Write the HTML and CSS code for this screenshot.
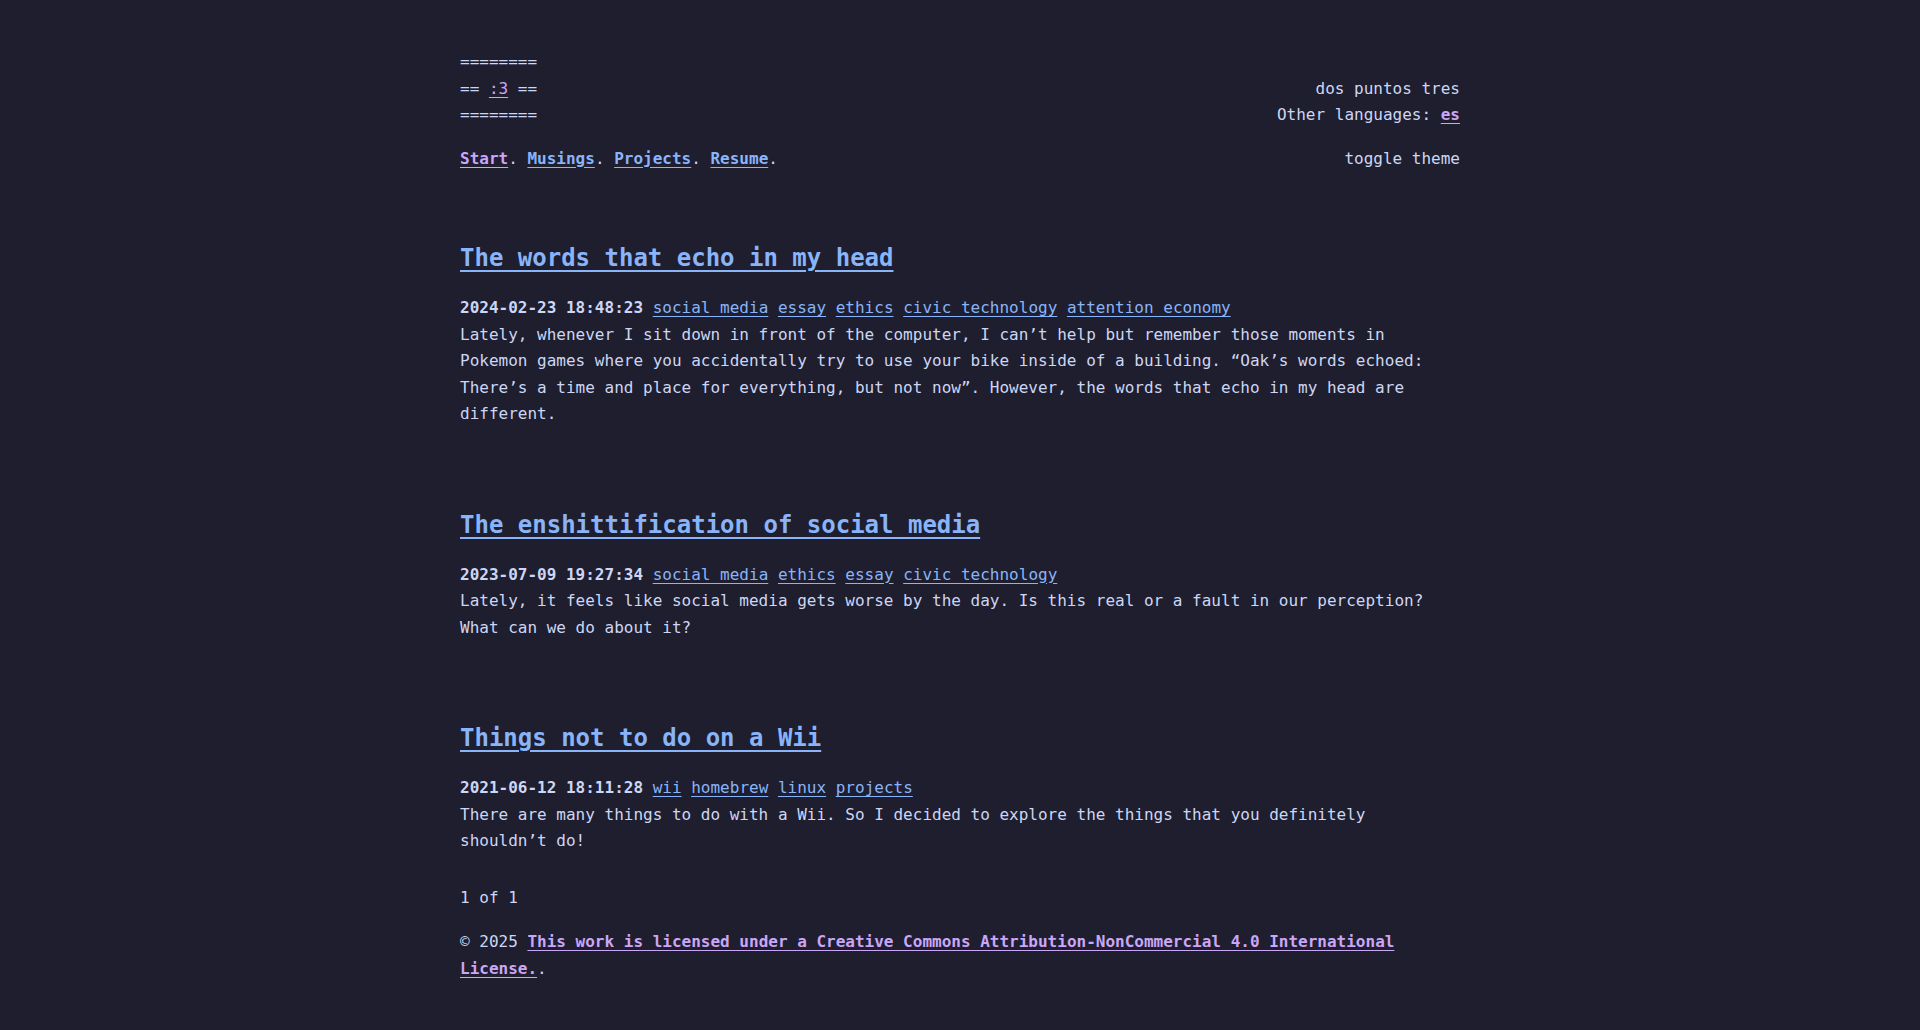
FILE: index.html
```html
<!DOCTYPE html>
<html lang="en">
<head>
<meta charset="utf-8">
<title>dos puntos tres</title>
<link rel="stylesheet" href="styles.css">
</head>
<body>
<div class="page">
  <header class="site-header">
    <div class="brand">
      <div>========</div>
      <div>== <a class="logo" href="#">:3</a> ==</div>
      <div>========</div>
    </div>
    <div class="site-info">
      <div>dos puntos tres</div>
      <div>Other languages: <a class="lang" href="#">es</a></div>
    </div>
  </header>
  <nav class="nav-row">
    <div class="nav-links"><a class="nav-link current" href="#">Start</a>. <a class="nav-link" href="#">Musings</a>. <a class="nav-link" href="#">Projects</a>. <a class="nav-link" href="#">Resume</a>.</div>
    <button class="toggle">toggle theme</button>
  </nav>

  <main class="posts">
    <article class="post">
      <h2 class="post-title"><a href="#">The words that echo in my head</a></h2>
      <div class="post-meta"><strong class="date">2024-02-23 18:48:23</strong> <a class="tag" href="#">social media</a> <a class="tag" href="#">essay</a> <a class="tag" href="#">ethics</a> <a class="tag" href="#">civic technology</a> <a class="tag" href="#">attention economy</a></div>
      <p class="post-summary">Lately, whenever I sit down in front of the computer, I can’t help but remember those moments in Pokemon games where you accidentally try to use your bike inside of a building. “Oak’s words echoed: There’s a time and place for everything, but not now”. However, the words that echo in my head are different.</p>
    </article>
    <article class="post">
      <h2 class="post-title"><a href="#">The enshittification of social media</a></h2>
      <div class="post-meta"><strong class="date">2023-07-09 19:27:34</strong> <a class="tag" href="#">social media</a> <a class="tag" href="#">ethics</a> <a class="tag" href="#">essay</a> <a class="tag" href="#">civic technology</a></div>
      <p class="post-summary">Lately, it feels like social media gets worse by the day. Is this real or a fault in our perception? What can we do about it?</p>
    </article>
    <article class="post">
      <h2 class="post-title"><a href="#">Things not to do on a Wii</a></h2>
      <div class="post-meta"><strong class="date">2021-06-12 18:11:28</strong> <a class="tag" href="#">wii</a> <a class="tag" href="#">homebrew</a> <a class="tag" href="#">linux</a> <a class="tag" href="#">projects</a></div>
      <p class="post-summary">There are many things to do with a Wii. So I decided to explore the things that you definitely shouldn’t do!</p>
    </article>
  </main>

  <div class="pagination">1 of 1</div>
  <footer class="site-footer">© 2025 <a class="license" href="#">This work is licensed under a Creative Commons Attribution-NonCommercial 4.0 International License.</a>.</footer>
</div>
</body>
</html>
```

FILE: styles.css
```css
html, body {
  margin: 0;
  padding: 0;
  background: #1e1e2e;
}

body {
  color: #cdd6f4;
  font-family: "DejaVu Sans Mono", "Liberation Mono", monospace;
  font-size: 16px;
  line-height: 26.5px;
}

a {
  color: #89b4fa;
  text-decoration: underline;
  text-underline-offset: 3px;
}

.page {
  width: 1000px;
  margin: 0 auto;
  padding-top: 49px;
  padding-bottom: 40px;
}

.site-header {
  display: flex;
  justify-content: space-between;
  align-items: flex-end;
}

.site-info {
  text-align: right;
}

.logo {
  color: #cba6f7;
}

.lang {
  color: #cba6f7;
  font-weight: bold;
}

.nav-row {
  display: flex;
  justify-content: space-between;
  align-items: center;
  margin-top: 17px;
}

.nav-link {
  font-weight: bold;
}

.nav-link.current {
  color: #cba6f7;
}

.toggle {
  background: none;
  border: 0;
  padding: 0;
  color: #cdd6f4;
  font: inherit;
  line-height: 26.5px;
  cursor: pointer;
}

.posts {
  margin-top: 66px;
}

.post + .post {
  margin-top: 77px;
}

.post-title {
  margin: 0 0 17px;
  font-size: 24px;
  line-height: 40px;
  font-weight: bold;
}

.post-title a {
  text-decoration-thickness: 2px;
  text-underline-offset: 4px;
}

.date {
  font-weight: bold;
}

.post-summary {
  margin: 0;
}

.pagination {
  margin-top: 30px;
}

.site-footer {
  margin-top: 18px;
}

.license {
  color: #cba6f7;
  font-weight: bold;
}
```
